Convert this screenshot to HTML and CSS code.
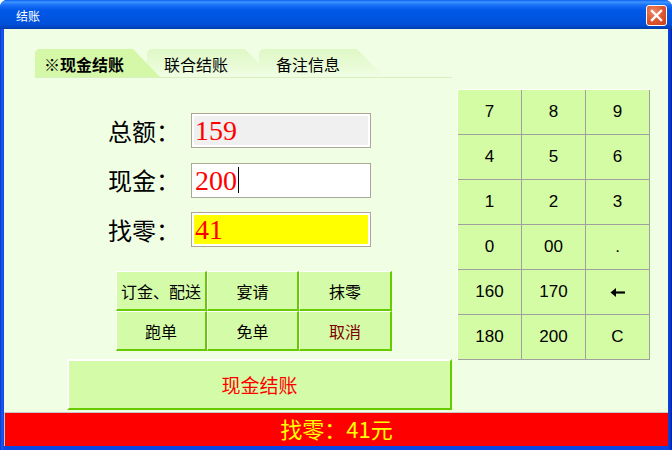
FILE: index.html
```html
<!DOCTYPE html>
<html lang="zh">
<head>
<meta charset="utf-8">
<title>结账</title>
<link rel="stylesheet" href="styles.css">
</head>
<body>
<div class="window">
  <div class="titlebar">
    <span class="title">结账</span>
    <span class="close">
      <svg width="13" height="13" viewBox="0 0 13 13"><path d="M2 2L11 11M11 2L2 11" stroke="#fff" stroke-width="2.4" stroke-linecap="square"/></svg>
    </span>
  </div>
  <div class="frame">
    <div class="main">
      <div class="left">
        <div class="tabs">
          <div class="tab tab-active"><span class="tab-label">※现金结账</span></div>
          <div class="tab tab-second"><span class="tab-label">联合结账</span></div>
          <div class="tab tab-third"><span class="tab-label">备注信息</span></div>
        </div>
        <div class="form">
          <div class="row">
            <span class="label">总额：</span>
            <div class="field field-gray">159</div>
          </div>
          <div class="row">
            <span class="label">现金：</span>
            <div class="field field-white">200<span class="caret"></span></div>
          </div>
          <div class="row">
            <span class="label">找零：</span>
            <div class="field field-yellow">41</div>
          </div>
        </div>
        <div class="actions">
          <div class="btn">订金、配送</div>
          <div class="btn">宴请</div>
          <div class="btn">抹零</div>
          <div class="btn">跑单</div>
          <div class="btn">免单</div>
          <div class="btn btn-cancel">取消</div>
        </div>
        <div class="pay">现金结账</div>
      </div>
      <div class="keypad">
        <div class="key">7</div>
        <div class="key">8</div>
        <div class="key">9</div>
        <div class="key">4</div>
        <div class="key">5</div>
        <div class="key">6</div>
        <div class="key">1</div>
        <div class="key">2</div>
        <div class="key">3</div>
        <div class="key">0</div>
        <div class="key">00</div>
        <div class="key">.</div>
        <div class="key">160</div>
        <div class="key">170</div>
        <div class="key"><svg width="16" height="11" viewBox="0 0 16 11"><path d="M15 5.5H4" stroke="#000" stroke-width="2.2"/><path d="M0.5 5.5L6 1V10Z" fill="#000"/></svg></div>
        <div class="key">180</div>
        <div class="key">200</div>
        <div class="key">C</div>
      </div>
    </div>
    <div class="status">找零：41元</div>
  </div>
</div>
</body>
</html>
```

FILE: styles.css
```css
html, body {
  margin: 0;
  padding: 0;
  background: #ffffff;
}

body {
  font-family: "Noto Sans CJK SC", "Noto Sans", sans-serif;
}

.window {
  width: 672px;
  height: 450px;
  display: flex;
  flex-direction: column;
  background: linear-gradient(to right, #0a34c8 0, #1a5cf0 2px, #0b46e0 4px, #0b46e0 668px, #0a3ad0 670px, #001e9c 672px);
  border-radius: 7px 7px 0 0;
  overflow: hidden;
}

.titlebar {
  height: 29px;
  flex: none;
  display: flex;
  align-items: center;
  justify-content: space-between;
  padding: 0 5px 0 16px;
  background: linear-gradient(to bottom, #0a60f0 0, #3d95ff 2px, #1a70f8 5px, #0058e8 10px, #0054e0 18px, #0050d8 24px, #0046c4 27px, #003aa8 29px);
}

.title {
  color: #ffffff;
  font-size: 12px;
  line-height: 1;
  margin-top: 2px;
}

.close {
  width: 19px;
  height: 19px;
  margin-top: 1px;
  border: 1px solid #ffffff;
  border-radius: 3px;
  background: radial-gradient(circle at 35% 30%, #f08a68 0, #e05a36 45%, #c83c18 100%);
  display: flex;
  align-items: center;
  justify-content: center;
}

.frame {
  flex: 1;
  margin: 0 4px 4px 4px;
  background: #f0ffe4;
  display: flex;
  flex-direction: column;
}

.main {
  flex: 1;
  display: flex;
}

.left {
  width: 448px;
  display: flex;
  flex-direction: column;
  padding-top: 20px;
}

/* tabs */
.tabs {
  display: flex;
  margin-left: 31px;
  width: 417px;
  height: 28px;
  border-bottom: 1px solid #d6f0c0;
}

.tab {
  position: relative;
  width: 125px;
  height: 28px;
  margin-right: -13px;
  flex: none;
  clip-path: polygon(0 3px, 3px 0, 98px 0, 125px 100%, 0 100%);
  background: linear-gradient(to bottom, #dff8c6 0, #e8fbd6 60%, #f0fee4 100%);
  display: flex;
  align-items: center;
}

.tab-active {
  z-index: 3;
  background: #d4f8a8;
}

.tab-second {
  z-index: 2;
}

.tab-third {
  z-index: 1;
}

.tab-label {
  width: 98px;
  text-align: center;
  font-size: 16px;
  line-height: 1;
  color: #000000;
  margin-top: 1px;
}

.tab-active .tab-label {
  font-weight: bold;
}

/* form */
.form {
  margin-top: 35px;
  margin-left: 104px;
  display: flex;
  flex-direction: column;
  gap: 14.5px;
}

.row {
  display: flex;
  align-items: center;
  height: 35px;
}

.label {
  width: 83px;
  font-size: 24px;
  line-height: 1;
  color: #000000;
}

.field {
  box-sizing: border-box;
  width: 180px;
  height: 35px;
  border: 1px solid #aca899;
  box-shadow: inset 0 0 0 2px #ffffff;
  padding: 0 0 0 3px;
  font-family: "Liberation Serif", "Times New Roman", serif;
  font-size: 28px;
  line-height: 33px;
  color: #ff0000;
  display: flex;
  align-items: center;
}

.field-gray {
  background: #f0f0f0;
}

.field-white {
  background: #ffffff;
}

.field-yellow {
  background: #ffff00;
}

.caret {
  display: inline-block;
  width: 0;
  height: 26px;
  border-left: 1px solid #000000;
  margin-left: 1px;
}

/* action buttons */
.actions {
  margin-top: 24px;
  margin-left: 112px;
  display: grid;
  grid-template-columns: 91px 92px 93px;
  grid-template-rows: 40px 40px;
}

.btn {
  box-sizing: border-box;
  background: #d4fca8;
  border-style: solid;
  border-width: 1px 2px 2px 1px;
  border-color: #ffffff #66cc00 #66cc00 #ffffff;
  display: flex;
  align-items: center;
  justify-content: center;
  font-size: 16px;
  line-height: 1;
  color: #000000;
}

.btn-cancel {
  color: #800000;
}

.pay {
  box-sizing: border-box;
  margin-top: 8px;
  margin-left: 63px;
  width: 385px;
  height: 51px;
  background: #d4fca8;
  border-style: solid;
  border-width: 2px;
  border-color: #ffffff #66cc00 #66cc00 #ffffff;
  display: flex;
  align-items: center;
  justify-content: center;
  font-size: 19px;
  line-height: 1;
  color: #ff0000;
}

/* keypad */
.keypad {
  margin-left: 5px;
  margin-top: 60px;
  align-self: flex-start;
  display: grid;
  grid-template-columns: repeat(3, 64px);
  grid-template-rows: repeat(6, 45px);
  border-top: 1px solid #ffffff;
  border-left: 1px solid #ffffff;
}

.key {
  box-sizing: border-box;
  background: #d4fca4;
  border-right: 1px solid #a0a0a0;
  border-bottom: 1px solid #a0a0a0;
  display: flex;
  align-items: center;
  justify-content: center;
  font-family: "Liberation Sans", Arial, sans-serif;
  font-size: 17px;
  color: #000000;
}

/* status bar */
.status {
  box-sizing: border-box;
  height: 34px;
  flex: none;
  background: #ff0000;
  border-top: 1px solid #c8c8c8;
  border-left: 1px solid #c8c8c8;
  padding-bottom: 4px;
  display: flex;
  align-items: center;
  justify-content: center;
  font-size: 22px;
  line-height: 1;
  color: #ffff00;
}
```
